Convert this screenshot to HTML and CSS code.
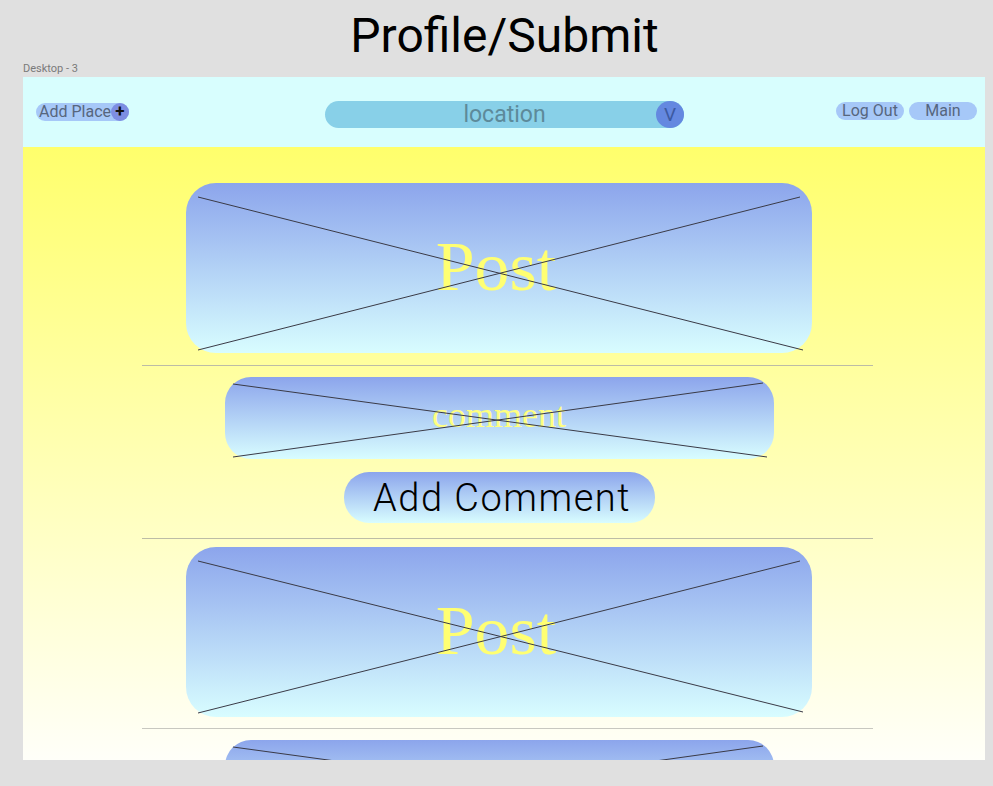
FILE: index.html
```html
<!DOCTYPE html>
<html>
<head>
<meta charset="utf-8">
<link rel="stylesheet" href="styles.css">
</head>
<body>
<h1 class="title">Profile/Submit</h1>
<div class="frame-label">Desktop - 3</div>
<div class="frame">
  <header class="topbar">
    <div class="left">
      <div class="pill add-place"><span class="pill-text">Add Place</span><span class="plus">+</span></div>
    </div>
    <div class="location"><span class="loc-text">location</span><span class="vbtn">V</span></div>
    <div class="right">
      <div class="pill small">Log Out</div>
      <div class="pill small">Main</div>
    </div>
  </header>
  <main class="content">
    <div class="card post post-first">
      <span class="post-text">Post</span>
      <svg class="cross" width="626" height="170" viewBox="0 0 626 170"><line x1="12" y1="14" x2="617" y2="167"/><line x1="614" y1="14" x2="12" y2="167"/></svg>
    </div>
    <div class="sep"></div>
    <div class="card comment">
      <span class="comment-text">comment</span>
      <svg class="cross" width="549" height="82" viewBox="0 0 549 82"><line x1="8" y1="7" x2="542" y2="80"/><line x1="538" y1="6" x2="8" y2="80"/></svg>
    </div>
    <div class="add-comment">Add Comment</div>
    <div class="sep sep-after-btn"></div>
    <div class="card post post-second">
      <span class="post-text">Post</span>
      <svg class="cross" width="626" height="170" viewBox="0 0 626 170"><line x1="12" y1="14" x2="617" y2="165"/><line x1="614" y1="14" x2="12" y2="166"/></svg>
    </div>
    <div class="sep sep-light"></div>
    <div class="card comment comment-last">
      <svg class="cross" width="549" height="82" viewBox="0 0 549 82"><line x1="8" y1="7" x2="542" y2="80"/><line x1="538" y1="6" x2="8" y2="80"/></svg>
    </div>
  </main>
</div>
</body>
</html>
```
FILE: styles.css
```css
* { box-sizing: border-box; }
html, body { margin: 0; padding: 0; }
body {
  background: #e0e0e0;
  font-family: Roboto, "Liberation Sans", sans-serif;
  width: 993px;
  height: 786px;
  overflow: hidden;
}
.title {
  margin: 10px 0 0 0;
  font-family: Roboto, sans-serif;
  font-weight: 400;
  font-size: 48px;
  line-height: 52px;
  text-align: center;
  color: #000;
  padding-left: 16px;
}
.frame-label {
  margin-left: 23px;
  font-size: 11px;
  line-height: 14px;
  color: #7a7a7a;
}
.frame {
  margin: 1px 0 0 23px;
  width: 962px;
  height: 683px;
  overflow: hidden;
  display: flex;
  flex-direction: column;
  background: linear-gradient(to bottom, #ffff6c 70px, #fffff9 100%);
}
.topbar {
  flex: none;
  height: 70px;
  background: #d8fefe;
  display: grid;
  grid-template-columns: 1fr auto 1fr;
  align-items: center;
  padding: 0 8px 0 13px;
}
.left { display: flex; align-items: center; }
.right { display: flex; justify-content: flex-end; gap: 5px; margin-top: -2px; }
.pill {
  background: #a6c8f8;
  border-radius: 9px;
  height: 18px;
  display: flex;
  align-items: center;
  color: #56667e;
  font-size: 16px;
}
.add-place {
  width: 93px;
  padding-left: 3px;
  justify-content: space-between;
  margin-top: -1px;
}
.pill-text { line-height: 18px; }
.plus {
  width: 18px;
  height: 18px;
  border-radius: 50%;
  background: #7d8ee2;
  color: #111;
  font-size: 17px;
  font-weight: 700;
  line-height: 17px;
  text-align: center;
}
.small {
  width: 68px;
  justify-content: center;
  line-height: 18px;
}
.location {
  width: 359px;
  height: 27px;
  border-radius: 14px;
  background: #88d0e8;
  display: flex;
  align-items: center;
  justify-content: center;
  position: relative;
  margin-top: 4px;
  margin-left: -4px;
}
.loc-text {
  font-size: 23px;
  color: #5d8a9a;
  line-height: 27px;
}
.vbtn {
  position: absolute;
  right: 0;
  top: 0;
  width: 28px;
  height: 27px;
  border-radius: 50%;
  background: #6488e0;
  color: #3c5aa2;
  font-size: 19px;
  line-height: 27px;
  text-align: center;
}
.content {
  display: flex;
  flex-direction: column;
  align-items: center;
  padding-right: 10px;
}
.card {
  position: relative;
  flex: none;
  display: flex;
  align-items: center;
  justify-content: center;
  background: linear-gradient(to bottom, #8ca5ec, #d8fdff);
}
.post {
  width: 626px;
  height: 170px;
  border-radius: 30px;
}
.post-first { margin-top: 36px; }
.post-second { margin-top: 8px; }
.post-text {
  font-family: "Liberation Serif", serif;
  font-size: 70px;
  line-height: 1;
  color: #ffff72;
  padding-bottom: 3px;
  padding-right: 6px;
}
.comment {
  width: 549px;
  height: 82px;
  border-radius: 26px;
  margin-top: 11px;
}
.comment-text {
  font-family: "Liberation Serif", serif;
  font-size: 36px;
  line-height: 1;
  color: #ffff80;
  padding-bottom: 6px;
}
.cross {
  position: absolute;
  left: 0;
  top: 0;
  overflow: visible;
}
.cross line {
  stroke: #3a3a46;
  stroke-width: 1;
}
.sep {
  flex: none;
  width: 731px;
  height: 1px;
  background: #bcbca6;
  margin-top: 12px;
  margin-left: 17px;
}
.sep-after-btn { margin-top: 15px; }
.sep-light { background: #c8c8c0; margin-top: 11px; }
.add-comment {
  flex: none;
  width: 311px;
  height: 51px;
  margin-top: 13px;
  border-radius: 25px;
  background: linear-gradient(to bottom, #8ca5ec, #d8fdff);
  display: flex;
  align-items: center;
  justify-content: center;
  font-family: Roboto, sans-serif;
  font-weight: 300;
  font-size: 38px;
  letter-spacing: 1.5px;
  color: #000;
  padding-left: 6px;
}
```
